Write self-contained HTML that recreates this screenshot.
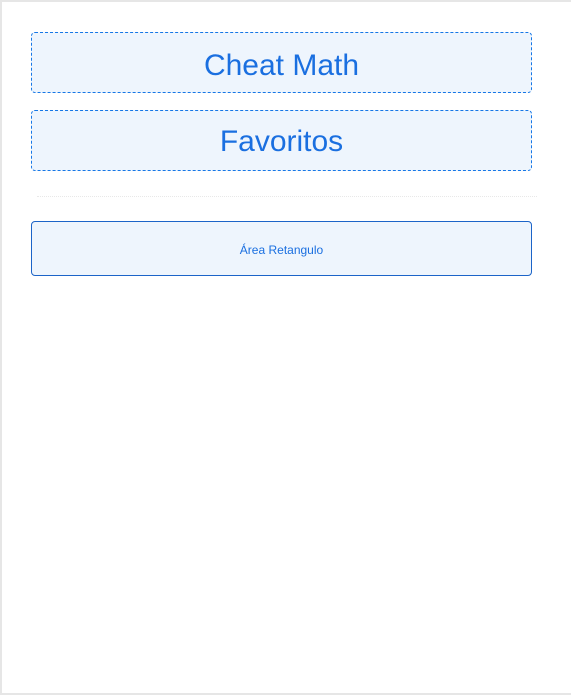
<!DOCTYPE html>
<html><head><meta charset="utf-8"><style>
html,body{margin:0;padding:0;background:#fff;}
body{width:571px;height:695px;position:relative;overflow:hidden;font-family:"Liberation Sans",Arial,sans-serif;}
.frame{position:absolute;left:0;top:0;width:571px;height:695px;border-top:2px solid #e6e6e6;border-left:2px solid #e6e6e6;border-bottom:2px solid #e6e6e6;box-sizing:border-box;}
.box{position:absolute;left:31px;width:501px;box-sizing:border-box;background:#eef5fd;border:1px dashed #1677e6;border-radius:4px;color:#1a6fe0;text-align:center;}
.b1{top:32px;height:61px;font-size:30px;line-height:65px;}
.b2{top:110px;height:61px;font-size:30px;line-height:61px;}
.sep{position:absolute;left:37px;top:196px;width:500px;border-top:1px dotted #e8e8e8;}
.b3{position:absolute;left:31px;top:221px;width:501px;height:55px;box-sizing:border-box;background:#eef5fd;border:1px solid #1c64c8;border-radius:4px;color:#1a6fe0;text-align:center;font-size:12px;line-height:57px;}
</style></head><body>
<div class="frame"></div>
<div class="box b1">Cheat Math</div>
<div class="box b2">Favoritos</div>
<div class="sep"></div>
<div class="b3">Área Retangulo</div>
</body></html>
